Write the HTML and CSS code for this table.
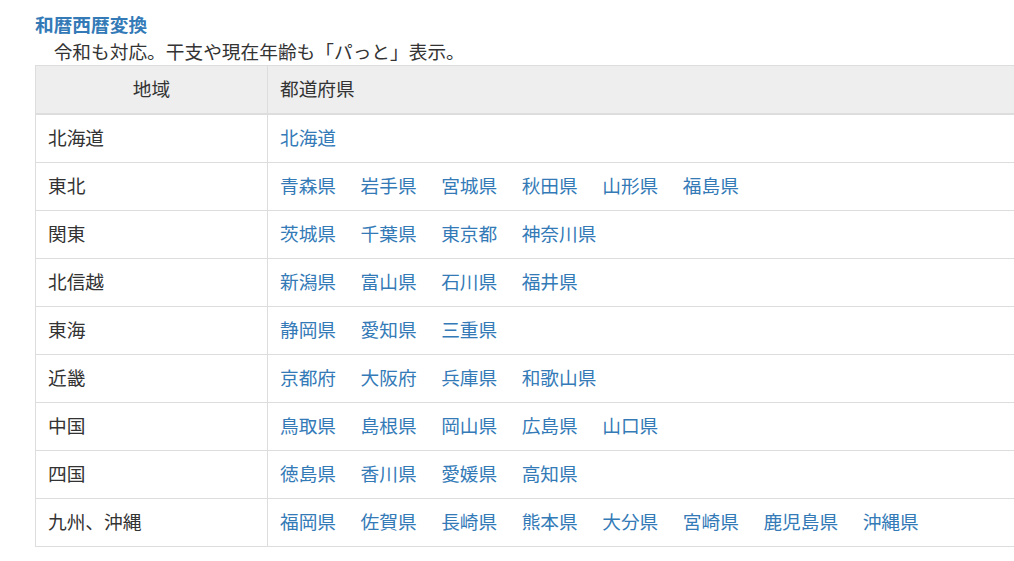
FILE: index.html
```html
<!DOCTYPE html>
<html lang="ja">
<head>
<meta charset="utf-8">
<title>地域と都道府県</title>
<link rel="stylesheet" href="styles.css">
</head>
<body>
<div class="page">
  <div class="title">和暦西暦変換</div>
  <div class="sub">　令和も対応。干支や現在年齢も「パっと」表示。</div>
  <table class="pref-table">
    <thead>
      <tr><th class="col-region">地域</th><th class="col-pref">都道府県</th></tr>
    </thead>
    <tbody>
      <tr><td>北海道</td><td><div class="links"><a href="#">北海道</a></div></td></tr>
      <tr><td>東北</td><td><div class="links"><a href="#">青森県</a><a href="#">岩手県</a><a href="#">宮城県</a><a href="#">秋田県</a><a href="#">山形県</a><a href="#">福島県</a></div></td></tr>
      <tr><td>関東</td><td><div class="links"><a href="#">茨城県</a><a href="#">千葉県</a><a href="#">東京都</a><a href="#">神奈川県</a></div></td></tr>
      <tr><td>北信越</td><td><div class="links"><a href="#">新潟県</a><a href="#">富山県</a><a href="#">石川県</a><a href="#">福井県</a></div></td></tr>
      <tr><td>東海</td><td><div class="links"><a href="#">静岡県</a><a href="#">愛知県</a><a href="#">三重県</a></div></td></tr>
      <tr><td>近畿</td><td><div class="links"><a href="#">京都府</a><a href="#">大阪府</a><a href="#">兵庫県</a><a href="#">和歌山県</a></div></td></tr>
      <tr><td>中国</td><td><div class="links"><a href="#">鳥取県</a><a href="#">島根県</a><a href="#">岡山県</a><a href="#">広島県</a><a href="#">山口県</a></div></td></tr>
      <tr><td>四国</td><td><div class="links"><a href="#">徳島県</a><a href="#">香川県</a><a href="#">愛媛県</a><a href="#">高知県</a></div></td></tr>
      <tr><td>九州、沖縄</td><td><div class="links"><a href="#">福岡県</a><a href="#">佐賀県</a><a href="#">長崎県</a><a href="#">熊本県</a><a href="#">大分県</a><a href="#">宮崎県</a><a href="#">鹿児島県</a><a href="#">沖縄県</a></div></td></tr>
    </tbody>
  </table>
</div>
</body>
</html>
```
FILE: styles.css
```css
html, body {
  margin: 0;
  padding: 0;
  overflow: hidden;
  background: #fff;
}
body {
  font-family: "Noto Sans CJK JP", "Noto Sans", sans-serif;
  font-size: 18.7px;
  color: #333;
}
.page {
  padding: 10px 0 0 35px;
}
.title {
  font-weight: bold;
  color: #337ab7;
  line-height: 27px;
}
.sub {
  line-height: 27px;
  margin-bottom: 1px;
}
.pref-table {
  border-collapse: collapse;
  width: 1100px;
  border: 1px solid #ddd;
}
.pref-table th,
.pref-table td {
  border: 1px solid #ddd;
  padding: 9px 12px 13px;
  line-height: 25px;
  font-weight: normal;
  text-align: left;
  vertical-align: middle;
}
.pref-table thead th {
  background: #eee;
  border-bottom: 2px solid #ddd;
}
.pref-table th.col-region {
  width: 207px;
  text-align: center;
}
.links {
  display: flex;
  gap: 24.5px;
}
.links a {
  color: #337ab7;
  text-decoration: none;
}
```
